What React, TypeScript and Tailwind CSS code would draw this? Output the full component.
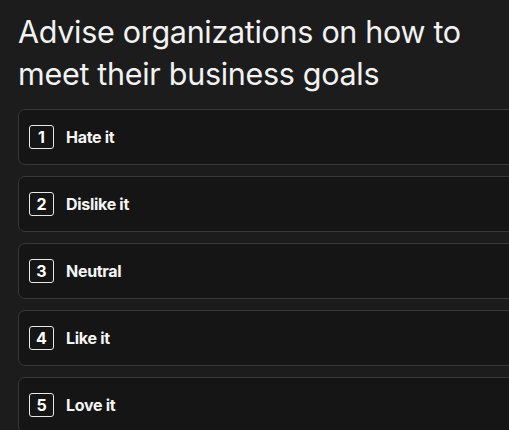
import React from 'react';

const options = ['Hate it', 'Dislike it', 'Neutral', 'Like it', 'Love it'];

export default function App() {
  return (
    <div
      className="h-[430px] w-full overflow-hidden bg-[#1c1c1c] text-white"
      style={{ fontFamily: 'Inter, "Liberation Sans", sans-serif' }}
    >
      <div className="pl-[18px] pt-[11px]">
        <h1 className="text-[30.5px] font-normal leading-[42px] tracking-[-0.3px] text-[#f2f2f2]">
          Advise organizations on how to
          <br />
          meet their business goals
        </h1>
        <div className="mt-[14px] flex w-[530px] flex-col gap-[11px]">
          {options.map((label, i) => (
            <div
              key={label}
              className="flex h-[56px] items-center gap-[12px] rounded-[7px] border border-[#383838] bg-[#151515] pl-[10px]"
            >
              <span className="flex h-[24px] w-[25px] items-center justify-center rounded-[3px] border border-[#e8e8e8] text-[16px] font-bold leading-none">
                {i + 1}
              </span>
              <span className="text-[16px] font-bold tracking-[-0.3px] text-[#f5f5f5]">{label}</span>
            </div>
          ))}
        </div>
      </div>
    </div>
  );
}
